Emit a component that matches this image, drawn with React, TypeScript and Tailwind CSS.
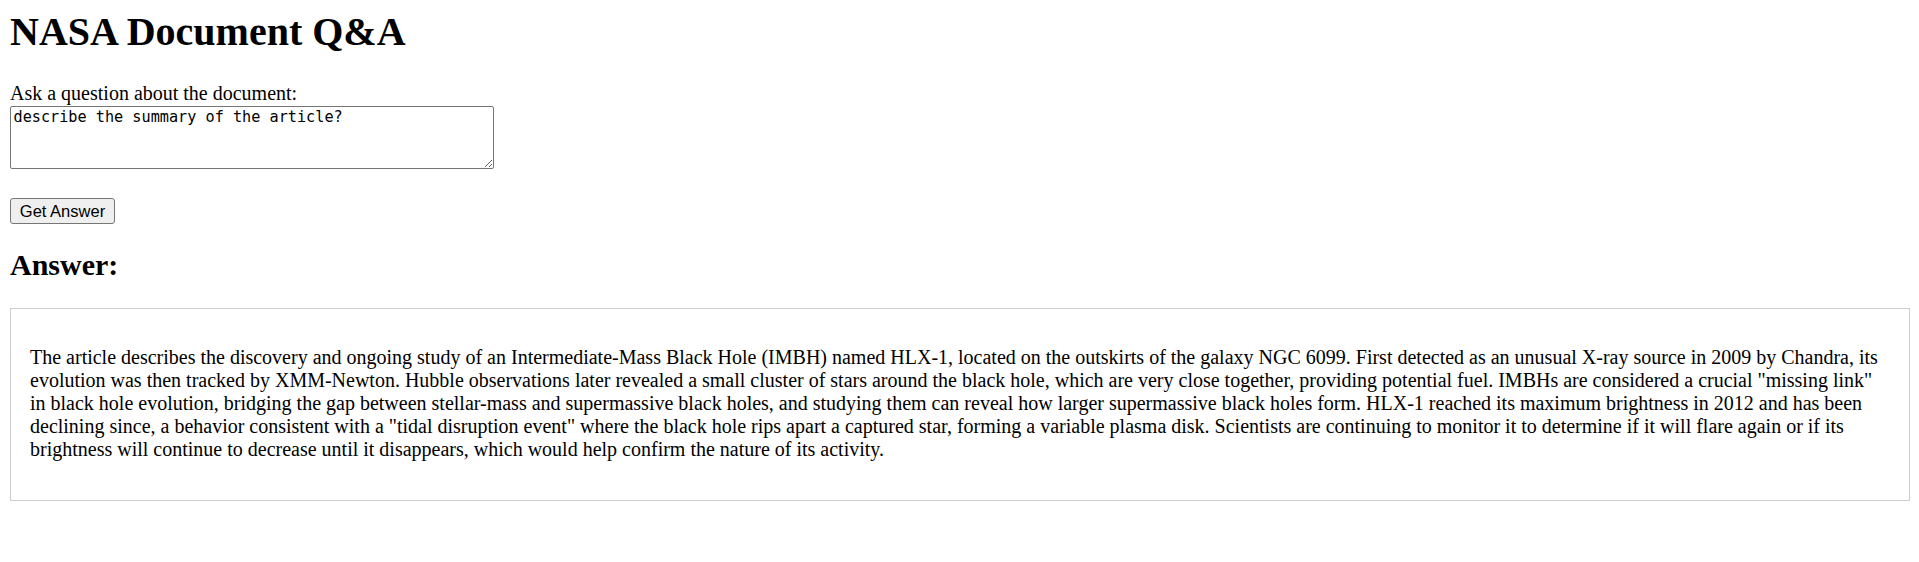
import { useState } from "react";

const ANSWER =
  'The article describes the discovery and ongoing study of an Intermediate-Mass Black Hole (IMBH) named HLX-1, located on the outskirts of the galaxy NGC 6099. First detected as an unusual X-ray source in 2009 by Chandra, its evolution was then tracked by XMM-Newton. Hubble observations later revealed a small cluster of stars around the black hole, which are very close together, providing potential fuel. IMBHs are considered a crucial "missing link" in black hole evolution, bridging the gap between stellar-mass and supermassive black holes, and studying them can reveal how larger supermassive black holes form. HLX-1 reached its maximum brightness in 2012 and has been declining since, a behavior consistent with a "tidal disruption event" where the black hole rips apart a captured star, forming a variable plasma disk. Scientists are continuing to monitor it to determine if it will flare again or if its brightness will continue to decrease until it disappears, which would help confirm the nature of its activity.';

export default function App() {
  const [question, setQuestion] = useState("describe the summary of the article?");

  return (
    <div className="min-h-screen bg-white pl-[10px] pr-[9px] pt-[9px] font-['Liberation_Serif','Times_New_Roman',serif] text-black">
      <h1 className="mb-[26.8px] text-[40px] font-bold leading-[46px]">NASA Document Q&amp;A</h1>

      <label htmlFor="question" className="block text-[20px] leading-[23px]">
        Ask a question about the document:
      </label>
      <textarea
        id="question"
        value={question}
        onChange={(e) => setQuestion(e.target.value)}
        className="mt-[1px] block h-[63px] w-[484px] rounded-[2px] border border-[#767676] bg-white p-[2.5px] font-['DejaVu_Sans_Mono',monospace] text-[15.2px] leading-[17.7px] text-black outline-none"
      />

      <button
        type="button"
        className="mt-[29px] block h-[26px] w-[105px] rounded-[3px] border border-[#767676] bg-[#efefef] font-['Liberation_Sans',Arial,sans-serif] text-[16.5px] leading-none text-black"
      >
        Get Answer
      </button>

      <h2 className="mt-[24.6px] mb-[25px] text-[30px] font-bold leading-[34.5px]">Answer:</h2>

      <div className="border border-[#cccccc] px-[19px] pt-[37.5px] pb-[39px]">
        <p className="text-[20px] leading-[23px]">{ANSWER}</p>
      </div>
    </div>
  );
}
